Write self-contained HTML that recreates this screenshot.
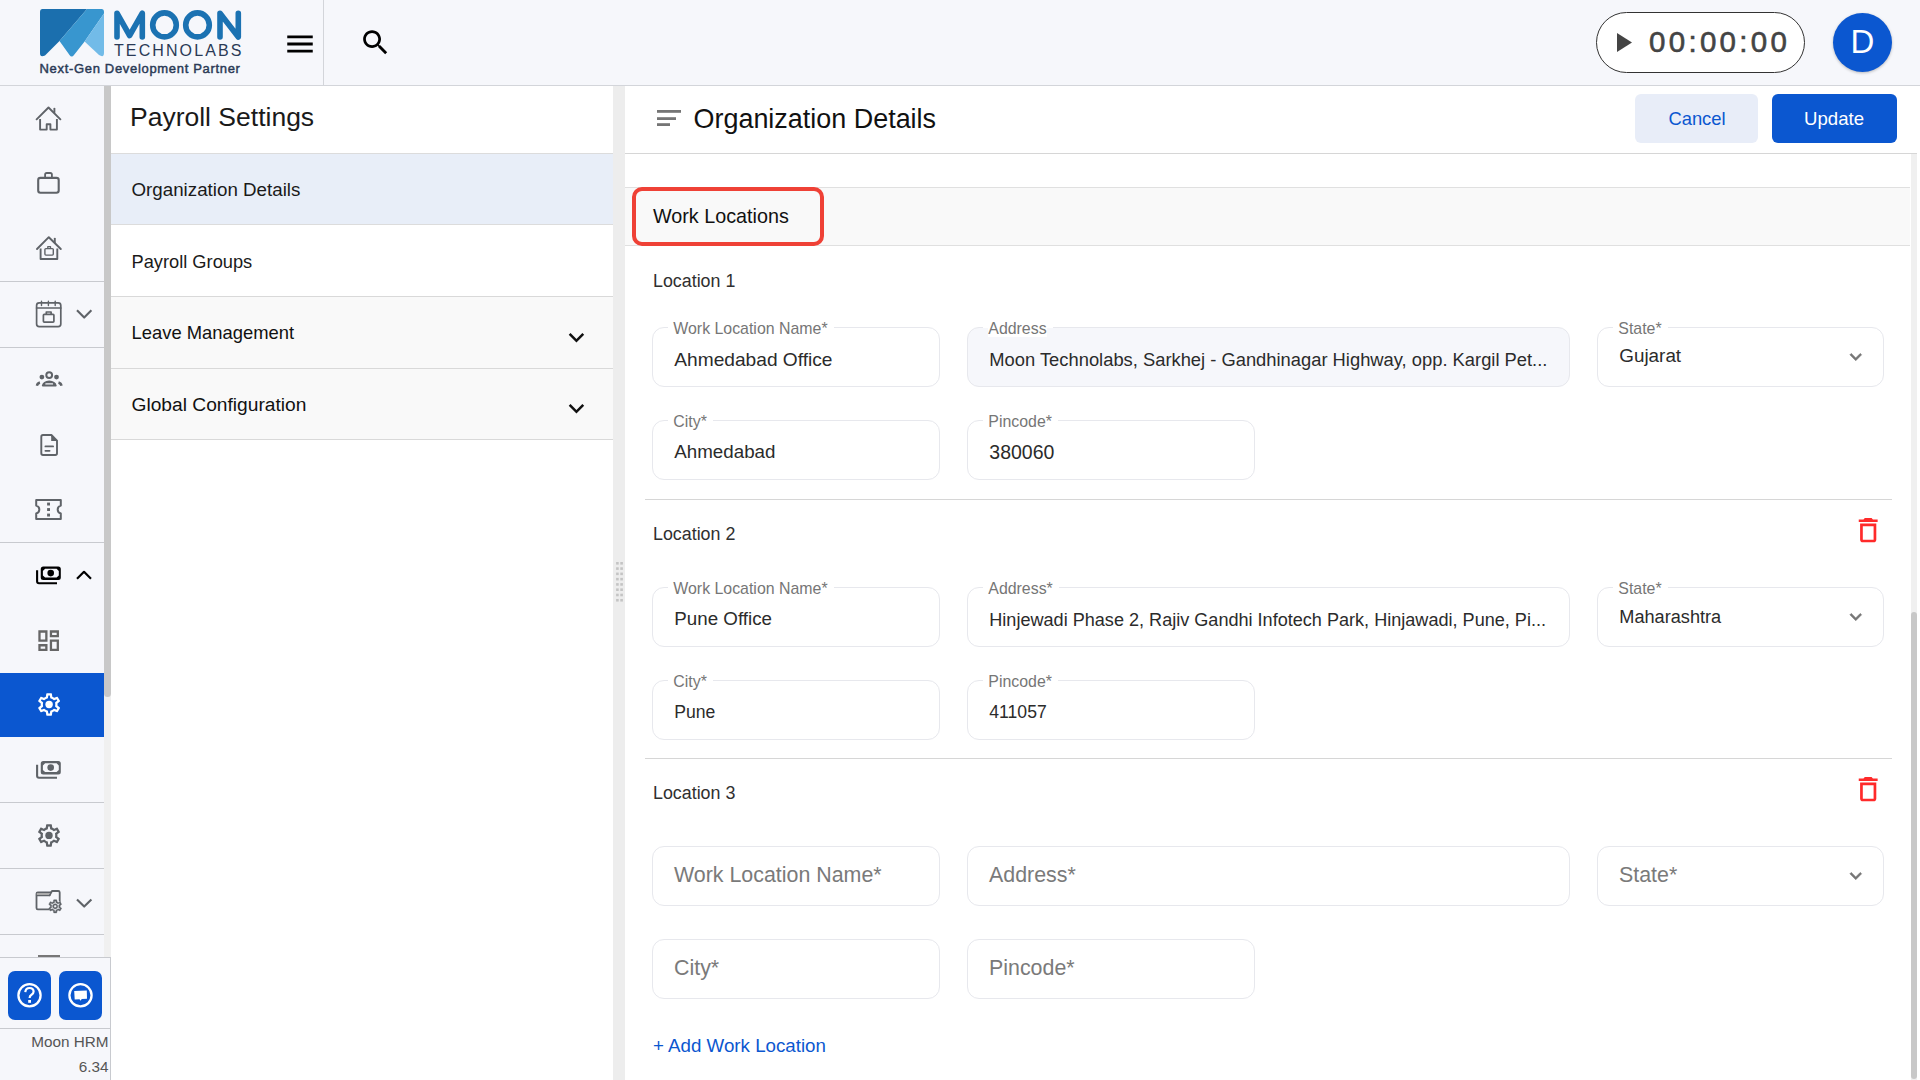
<!DOCTYPE html>
<html><head><meta charset="utf-8">
<style>
*{margin:0;padding:0;box-sizing:border-box}
html,body{width:1920px;height:1080px;overflow:hidden;background:#fff;font-family:"Liberation Sans",sans-serif;}
.a{position:absolute}
.t{position:absolute;white-space:nowrap;line-height:1}
svg{position:absolute;overflow:visible}
/* top bar */
#top{left:0;top:0;width:1920px;height:86px;background:#f6f7fb;border-bottom:1px solid #d3d5da}
/* sidebar */
#side{left:0;top:86px;width:111px;height:994px;background:#f6f7fb}
.hr{position:absolute;height:1px;background:#c8cacf}
/* settings panel */
#panel{left:111px;top:86px;width:502px;height:994px;background:#fff}
#split{left:613px;top:86px;width:12px;height:994px;background:#ededed}
#main{left:625px;top:86px;width:1295px;height:994px;background:#fff}
.fld{position:absolute;border:1px solid #e7e8ed;border-radius:12px;background:#fff}
.lbl{position:absolute;white-space:nowrap;line-height:1;font-size:15.5px;color:#767676;background:#fff}
.val{position:absolute;white-space:nowrap;line-height:1;font-size:18.5px;color:#2b2b2b}
.ph{position:absolute;white-space:nowrap;line-height:1;font-size:21.5px;color:#7a7a7a}
.loc{position:absolute;white-space:nowrap;line-height:1;font-size:18px;color:#303030}
</style></head>
<body>
<!-- TOP BAR -->
<div id="top" class="a">
  <!-- logo mark -->
  <svg style="left:0;top:0" width="260" height="86" viewBox="0 0 260 86">
    <path d="M42.5 9 H87 L59.5 41 L45 55.5 Q40 58 40 53 V12 Q40 9 42.5 9Z" fill="#1b6fae"/>
    <path d="M87 9 H101.5 Q104 9 104 12 V13.5 L84.6 41.5 L74 55 Q71.7 58 69.5 55 L59.5 41Z" fill="#3896cf"/>
    <path d="M104 13.5 V53 Q104 58 99 55 L84.6 41.5Z" fill="#72bbe8"/>
    <g fill="none" stroke="#1b72b2" stroke-width="5.6" stroke-linecap="round" stroke-linejoin="round">
      <path d="M117 37 V13.2 L129.6 35.5 L142.3 13.2 V37"/>
      <ellipse cx="164.5" cy="24.9" rx="11.8" ry="12"/>
      <ellipse cx="197.5" cy="24.9" rx="11.8" ry="12"/>
      <path d="M220 37 V13.2 L238.3 37 V13.2"/>
    </g>
  </svg>
  <div class="t" style="left:114px;top:42.5px;font-size:16px;letter-spacing:2.1px;color:#2a3a56">TECHNOLABS</div>
  <div class="t" style="left:39.5px;top:61.6px;font-size:13px;letter-spacing:0.68px;color:#2a3a56;-webkit-text-stroke:0.45px #2a3a56">Next-Gen Development Partner</div>
  <!-- menu -->
  <svg style="left:283px;top:27px" width="34" height="34" viewBox="0 0 24 24"><path d="M3 18h18v-2H3v2zm0-5h18v-2H3v2zm0-7v2h18V6H3z" fill="#000"/></svg>
  <div class="a" style="left:323px;top:0;width:1px;height:85px;background:#d3d5da"></div>
  <!-- search -->
  <svg style="left:359px;top:26px" width="33" height="33" viewBox="0 0 24 24"><path d="M15.5 14h-.79l-.28-.27C15.41 12.59 16 11.11 16 9.5 16 5.91 13.09 3 9.5 3S3 5.91 3 9.5 5.91 16 9.5 16c1.61 0 3.09-.59 4.23-1.57l.27.28v.79l5 4.99L20.49 19l-4.99-5zm-6 0C7.01 14 5 11.99 5 9.5S7.01 5 9.5 5 14 7.01 14 9.5 11.99 14 9.5 14z" fill="#000"/></svg>
  <!-- timer -->
  <div class="a" style="left:1596px;top:12px;width:209px;height:61px;border:1.3px solid #333;border-radius:31px;background:#fff"></div>
  <svg style="left:0;top:0" width="1920" height="86"><path d="M1617 33 L1632 42.5 L1617 52Z" fill="#444"/></svg>
  <div class="t" style="left:1649px;top:27.2px;font-size:29.5px;letter-spacing:3.3px;color:#444;-webkit-text-stroke:0.6px #444">00:00:00</div>
  <!-- avatar -->
  <div class="a" style="left:1833px;top:13px;width:59px;height:59px;border-radius:50%;background:#0b57d0;box-shadow:0 1px 3px rgba(0,0,0,.25)"></div>
  <div class="t" style="left:1833px;top:24.9px;width:59px;text-align:center;font-size:33px;color:#fff">D</div>
</div>

<!-- SIDEBAR -->
<div id="side" class="a">
  <div class="hr" style="left:0;top:195px;width:104px"></div>
  <div class="hr" style="left:0;top:261px;width:104px"></div>
  <div class="hr" style="left:0;top:456px;width:104px"></div>
  <div class="hr" style="left:0;top:716px;width:104px"></div>
  <div class="hr" style="left:0;top:782px;width:104px"></div>
  <div class="hr" style="left:0;top:848px;width:104px"></div>
  <div class="a" style="left:0;top:587px;width:104px;height:64px;background:#0b57d0"></div>
  <!-- scrollbar -->
  <div class="a" style="left:104px;top:0;width:7px;height:871px;background:#f0f0f0"></div>
  <div class="a" style="left:104px;top:0;width:7px;height:611px;background:#c8c8c8;border-radius:0 0 3.5px 3.5px"></div>
  <div class="a" style="left:37.5px;top:869.3px;width:22px;height:1.6px;background:#777"></div>
  <div class="hr" style="left:0;top:871px;width:111px;background:#c8cacf"></div>
  <div class="hr" style="left:0;top:942px;width:111px;background:#c8cacf"></div>
  <div class="a" style="left:110px;top:871px;width:1px;height:123px;background:#c8cacf"></div>
  <div class="a" style="left:8px;top:885px;width:43px;height:49px;border-radius:7px;background:#0b57d0"></div>
  <div class="a" style="left:59px;top:885px;width:43px;height:49px;border-radius:7px;background:#0b57d0"></div>
  <div class="t" style="left:0;top:948px;width:108.5px;text-align:right;font-size:15.3px;color:#555">Moon HRM</div>
  <div class="t" style="left:0;top:973px;width:108.5px;text-align:right;font-size:15.3px;color:#555">6.34</div>
</div>

<svg style="left:0;top:0" width="112" height="1080" viewBox="0 0 112 1080">
 <g fill="none" stroke="#5f6368" stroke-width="1.9" stroke-linecap="round" stroke-linejoin="round">
  <!-- home -->
  <path d="M36.6 119.3 L48.5 107.5 L60.4 119.3"/>
  <path d="M54.4 108.6 V112.3"/>
  <path d="M40.1 118.9 V129.6 H46.7 V124.3 H50.4 V129.6 H56.9 V118.9" stroke-linecap="butt"/>
  <!-- briefcase -->
  <rect x="38.2" y="177.9" width="20.5" height="14.8" rx="2.2" stroke-width="2.1"/>
  <path d="M45.1 177.5 V174.6 Q45.1 173 46.7 173 H50.3 Q51.9 173 51.9 174.6 V177.5" stroke-width="1.8"/>
  <!-- home work -->
  <path d="M37 249 L48.8 237.2 L60.8 249"/>
  <path d="M54.8 238.6 V242.4"/>
  <path d="M40.6 248.6 V259 H57.3 V248.6" stroke-linecap="butt"/>
  <rect x="44.9" y="248.6" width="8.4" height="6.5" rx="1" stroke-width="1.4"/>
  <path d="M47.8 248.4 V246.6 H50.5 V248.4" stroke-width="1.3"/>
  <!-- calendar -->
  <rect x="36.6" y="302.9" width="24.2" height="23.8" rx="2.6" stroke-width="1.7"/>
  <path d="M36.6 308 H60.8" stroke-width="1.7"/>
  <path d="M41.5 301.2 V305.6 M48.4 301.2 V305.6 M55.2 301.2 V305.6" stroke-width="1.4"/>
  <rect x="43.4" y="314.3" width="10.5" height="7.8" rx="0.9" stroke-width="1.7"/>
  <path d="M46.3 313.9 V312 H51.1 V313.9" stroke-width="1.7"/>
  <path d="M77 310.3 L84.2 317.6 L91.4 310.3" stroke-width="2.1" stroke-linecap="butt"/>
  <!-- groups -->
  <circle cx="49.2" cy="375.1" r="2.9" stroke-width="2"/>
  <path d="M42.6 385.6 Q43.6 381.6 49.2 381.3 Q54.8 381.6 55.9 385.6 Z" stroke-width="1.6" fill="#5f6368"/>
  <path d="M36.9 385.8 Q37.3 383.3 39.9 382.5 M61.5 385.8 Q61.1 383.3 58.5 382.5" stroke-width="2.4" stroke-linecap="butt"/><path d="M45.8 383.9 H52.6" stroke="#f6f7fb" stroke-width="1.1"/>
  <!-- doc -->
  <path d="M51.4 435 H43 Q41.3 435 41.3 436.7 V453.3 Q41.3 455 43 455 H55.3 Q57 455 57 453.3 V440.6 Z" stroke-width="1.9"/>
  <path d="M45.4 446.4 H53.1 M45.4 450.8 H49.6" stroke-width="1.8"/>
  <!-- ticket -->
  <path d="M36.2 500.1 H60.8 V505.6 A4 4 0 0 0 60.8 513.4 V518.9 H36.2 V513.4 A4 4 0 0 0 36.2 505.6 Z" stroke-width="2"/>
  <!-- payments black -->
  <g stroke="#000">

   <path d="M77 578.8 L84 571.8 L91 578.8" stroke-width="2.2" stroke-linecap="butt"/>
  </g>
  <!-- payments gray -->

  <!-- folder gear -->
  <path d="M49.6 895.3 L52 891 H58.2 Q59.7 891 59.7 892.5 V902.5 M50.5 909.4 H37.8 Q36.5 909.4 36.5 908.1 V893.7 Q36.5 892.4 37.8 892.4 H50.6" stroke-width="1.8"/>
  <path d="M36.8 895.3 H49.6" stroke-width="1.8"/>

  <path d="M77 899.4 L84.2 906.6 L91.4 899.4" stroke-width="2.1" stroke-linecap="butt"/>
 </g>
 <!-- fills -->
 <g fill="#5f6368">
  <path d="M51.2 434.8 L57.3 440.9 H51.2 Z"/>
  <rect x="47.1" y="502.6" width="2.9" height="2.9"/><rect x="47.1" y="508.1" width="2.9" height="2.9"/><rect x="47.1" y="513.6" width="2.9" height="2.9"/>
  <circle cx="41.9" cy="377.1" r="2.4"/><circle cx="56.5" cy="377.1" r="2.4"/>
  
  <path d="M36.8 893 H49.6 L49 895 H36.8Z" fill="#aaa"/>
 </g>
 <path fill-rule="evenodd" fill="#000" d="M43.25 566.4 H58.3 Q60.8 566.4 60.8 568.9 V577.4 Q60.8 579.9 58.3 579.9 H43.25 Q40.75 579.9 40.75 577.4 V568.9 Q40.75 566.4 43.25 566.4 Z M45.1 568.7 H56.6 L58.8 570.9 V575.4 L56.6 577.6 H45.1 L42.9 575.4 V570.9 Z"/><circle cx="50.7" cy="573.1" r="3.3" fill="#000"/><path d="M37.1 570.2 V581.3 Q37.1 583.2 39 583.2 H57" fill="none" stroke="#000" stroke-width="2.1"/><path fill-rule="evenodd" fill="#5f6368" d="M43.25 760.9 H58.3 Q60.8 760.9 60.8 763.4 V771.9 Q60.8 774.4 58.3 774.4 H43.25 Q40.75 774.4 40.75 771.9 V763.4 Q40.75 760.9 43.25 760.9 Z M45.1 763.2 H56.6 L58.8 765.4 V769.9 L56.6 772.1 H45.1 L42.9 769.9 V765.4 Z"/><circle cx="50.7" cy="767.6" r="3.3" fill="#5f6368"/><path d="M37.1 764.7 V775.8 Q37.1 777.7 39 777.7 H57" fill="none" stroke="#5f6368" stroke-width="2.1"/>
 <!-- dashboard -->
 <svg x="34.9" y="626.9" width="27.5" height="27.5" viewBox="0 0 24 24"><path fill="#666" d="M19 5v2h-4V5h4M9 5v6H5V5h4m10 8v6h-4v-6h4M9 17v2H5v-2h4M21 3h-8v6h8V3zM11 3H3v10h8V3zm10 8h-8v10h8V11zm-8 4H3v6h8v-6z"/></svg>
 <!-- gear active -->
 <svg x="35.6" y="691" width="27" height="27" viewBox="0 0 24 24"><path fill="#fff" d="M19.43 12.98c.04-.32.07-.64.07-.98 0-.34-.03-.66-.07-.98l2.11-1.65c.19-.15.24-.42.12-.64l-2-3.46c-.09-.16-.26-.25-.44-.25-.06 0-.12.01-.17.03l-2.49 1c-.52-.4-1.08-.73-1.69-.98l-.38-2.65C14.46 2.18 14.25 2 14 2h-4c-.25 0-.46.18-.49.42l-.38 2.65c-.61.25-1.170.59-1.69.98l-2.49-1c-.06-.02-.12-.03-.18-.03-.17 0-.34.09-.43.25l-2 3.46c-.13.22-.07.49.12.64l2.11 1.650c-.04.32-.07.65-.07.98 0 .33.03.66.07.98l-2.11 1.65c-.19.15-.24.42-.12.64l2 3.46c.09.16.26.25.44.25.06 0 .12-.01.17-.03l2.49-1c.52.4 1.08.73 1.69.98l.38 2.65c.03.24.24.42.49.42h4c.25 0 .46-.18.49-.42l.38-2.65c.61-.25 1.17-.59 1.69-.98l2.49 1c.06.02.12.03.18.03.17 0 .34-.09.43-.25l2-3.46c.12-.22.07-.49-.12-.64l-2.11-1.65zm-1.98-1.71c.04.31.05.52.05.73 0 .21-.02.43-.05.73l-.14 1.13.89.7 1.08.84-.7 1.21-1.27-.51-1.04-.42-.9.68c-.43.32-.84.56-1.25.73l-1.06.43-.16 1.13-.2 1.35h-1.4l-.19-1.35-.16-1.13-1.06-.43c-.43-.18-.83-.41-1.23-.71l-.91-.7-1.06.43-1.27.51-.7-1.21 1.08-.84.89-.7-.14-1.130c-.03-.31-.05-.54-.05-.74s.02-.43.05-.73l.14-1.13-.89-.7-1.08-.84.7-1.21 1.27.51 1.04.42.9-.68c.43-.32.84-.56 1.25-.73l1.06-.43.16-1.13.2-1.35h1.39l.19 1.35.16 1.13 1.06.43c.43.18.83.41 1.23.71l.91.7 1.06-.43 1.27-.51.7 1.21-1.07.85-.89.7.14 1.13z"/><circle cx="12" cy="12" r="3.3" fill="#fff"/></svg>
 <circle cx="55.2" cy="906.3" r="6.6" fill="#f6f7fb"/>
 <svg x="47.3" y="898.4" width="15.8" height="15.8" viewBox="0 0 24 24"><path fill="#5f6368" stroke="#5f6368" stroke-width="0.6" d="M19.43 12.98c.04-.32.07-.64.07-.98 0-.34-.03-.66-.07-.98l2.11-1.65c.19-.15.24-.42.12-.64l-2-3.46c-.09-.16-.26-.25-.44-.25-.06 0-.12.01-.17.03l-2.49 1c-.52-.4-1.08-.73-1.69-.98l-.38-2.65C14.46 2.18 14.25 2 14 2h-4c-.25 0-.46.18-.49.42l-.38 2.65c-.61.25-1.170.59-1.69.98l-2.49-1c-.06-.02-.12-.03-.18-.03-.17 0-.34.09-.43.25l-2 3.46c-.13.22-.07.49.12.64l2.11 1.650c-.04.32-.07.65-.07.98 0 .33.03.66.07.98l-2.11 1.65c-.19.15-.24.42-.12.64l2 3.46c.09.16.26.25.44.25.06 0 .12-.01.17-.03l2.49-1c.52.4 1.08.73 1.69.98l.38 2.65c.03.24.24.42.49.42h4c.25 0 .46-.18.49-.42l.38-2.65c.61-.25 1.17-.59 1.69-.98l2.49 1c.06.02.12.03.18.03.17 0 .34-.09.43-.25l2-3.46c.12-.22.07-.49-.12-.64l-2.11-1.65zm-1.98-1.71c.04.31.05.52.05.73 0 .21-.02.43-.05.73l-.14 1.13.89.7 1.08.84-.7 1.21-1.27-.51-1.04-.42-.9.68c-.43.32-.84.56-1.25.73l-1.06.43-.16 1.13-.2 1.35h-1.4l-.19-1.35-.16-1.13-1.06-.43c-.43-.18-.83-.41-1.23-.71l-.91-.7-1.06.43-1.27.51-.7-1.21 1.08-.84.89-.7-.14-1.130c-.03-.31-.05-.54-.05-.74s.02-.43.05-.73l.14-1.13-.89-.7-1.08-.84.7-1.21 1.27.51 1.04.42.9-.68c.43-.32.84-.56 1.25-.73l1.06-.43.16-1.13.2-1.35h1.39l.19 1.35.16 1.13 1.06.43c.43.18.83.41 1.23.71l.91.7 1.06-.43 1.27-.51.7 1.21-1.07.85-.89.7.14 1.13zM12 8c-2.21 0-4 1.79-4 4s1.79 4 4 4 4-1.79 4-4-1.79-4-4-4zm0 6c-1.1 0-2-.9-2-2s.9-2 2-2 2 .9 2 2-.9 2-2 2z"/></svg>
 <!-- gear gray -->
 <svg x="35.5" y="821.9" width="27" height="27" viewBox="0 0 24 24"><path fill="#5f6368" d="M19.43 12.98c.04-.32.07-.64.07-.98 0-.34-.03-.66-.07-.98l2.11-1.65c.19-.15.24-.42.12-.64l-2-3.46c-.09-.16-.26-.25-.44-.25-.06 0-.12.01-.17.03l-2.49 1c-.52-.4-1.08-.73-1.69-.98l-.38-2.65C14.46 2.18 14.25 2 14 2h-4c-.25 0-.46.18-.49.42l-.38 2.65c-.61.25-1.170.59-1.69.98l-2.49-1c-.06-.02-.12-.03-.18-.03-.17 0-.34.09-.43.25l-2 3.46c-.13.22-.07.49.12.64l2.11 1.650c-.04.32-.07.65-.07.98 0 .33.03.66.07.98l-2.11 1.65c-.19.15-.24.42-.12.64l2 3.46c.09.16.26.25.44.25.06 0 .12-.01.17-.03l2.49-1c.52.4 1.08.73 1.69.98l.38 2.65c.03.24.24.42.49.42h4c.25 0 .46-.18.49-.42l.38-2.65c.61-.25 1.17-.59 1.69-.98l2.49 1c.06.02.12.03.18.03.17 0 .34-.09.43-.25l2-3.46c.12-.22.07-.49-.12-.64l-2.11-1.65zm-1.98-1.71c.04.31.05.52.05.73 0 .21-.02.43-.05.73l-.14 1.13.89.7 1.08.84-.7 1.21-1.27-.51-1.04-.42-.9.68c-.43.32-.84.56-1.25.73l-1.06.43-.16 1.13-.2 1.35h-1.4l-.19-1.35-.16-1.13-1.06-.43c-.43-.18-.83-.41-1.23-.71l-.91-.7-1.06.43-1.27.51-.7-1.21 1.08-.84.89-.7-.14-1.130c-.03-.31-.05-.54-.05-.74s.02-.43.05-.73l.14-1.13-.89-.7-1.08-.84.7-1.21 1.27.51 1.04.42.9-.68c.43-.32.84-.56 1.25-.73l1.06-.43.16-1.13.2-1.35h1.39l.19 1.35.16 1.13 1.06.43c.43.18.83.41 1.23.71l.91.7 1.06-.43 1.27-.51.7 1.21-1.07.85-.89.7.14 1.13z"/><circle cx="12" cy="12" r="3.3" fill="#5f6368"/></svg>
 <!-- help -->
 <circle cx="29.5" cy="995.3" r="11.1" fill="none" stroke="#fff" stroke-width="2.3"/>
 <circle cx="80.5" cy="995.3" r="11.1" fill="none" stroke="#fff" stroke-width="2.3"/>
 <path d="M25.3 992.2 Q25.6 988 29.6 988 Q33.6 988 33.6 991.6 Q33.6 993.6 31.5 994.8 Q29.6 995.9 29.6 998" fill="none" stroke="#fff" stroke-width="2.2"/>
 <rect x="28.2" y="1000" width="2.8" height="2.8" fill="#fff"/>
 <path d="M74.2 990.9 L86.8 990.6 L87 998.7 L81.7 999 L80.6 1000.8 L79.5 999.2 L74.7 999.4Z" fill="#fff"/>
</svg>
<!-- SETTINGS PANEL -->
<div id="panel" class="a">
  <div class="t" style="left:19px;top:17.7px;font-size:26.5px;color:#1a1a1a">Payroll Settings</div>
  <div class="hr" style="left:0;top:67px;width:502px;background:#dcdcdc"></div>
  <div class="a" style="left:0;top:68px;width:502px;height:70px;background:#e8eef8"></div>
  <div class="hr" style="left:0;top:138px;width:502px;background:#dcdcdc"></div>
  <div class="hr" style="left:0;top:210px;width:502px;background:#d9d9d9"></div>
  <div class="a" style="left:0;top:211px;width:502px;height:71px;background:#f9f9f9"></div>
  <div class="hr" style="left:0;top:282px;width:502px;background:#d9d9d9"></div>
  <div class="a" style="left:0;top:283px;width:502px;height:70px;background:#f9f9f9"></div>
  <div class="hr" style="left:0;top:353px;width:502px;background:#d9d9d9"></div>
  <div class="t" style="left:20.5px;top:95px;font-size:18.75px;color:#1a1a1a">Organization Details</div>
  <div class="t" style="left:20.5px;top:167.3px;font-size:18.25px;color:#1a1a1a">Payroll Groups</div>
  <div class="t" style="left:20.5px;top:238.1px;font-size:18.4px;color:#111">Leave Management</div>
  <div class="t" style="left:20.5px;top:309.3px;font-size:19.2px;color:#111">Global Configuration</div>
  <svg style="left:450.1px;top:235.9px" width="30.9" height="30.9" viewBox="0 0 24 24"><path d="M16.59 8.59L12 13.17 7.41 8.59 6 10l6 6 6-6z" fill="#111"/></svg>
  <svg style="left:450.1px;top:306.7px" width="30.9" height="30.9" viewBox="0 0 24 24"><path d="M16.59 8.59L12 13.17 7.41 8.59 6 10l6 6 6-6z" fill="#111"/></svg>
</div>
<div id="split" class="a">
  <svg style="left:0;top:0" width="12" height="994"><g fill="#c4c4c4">
  <rect x="3.1" y="476.00" width="2.6" height="2.6"/><rect x="7.3" y="476.00" width="2.6" height="2.6"/><rect x="3.1" y="481.28" width="2.6" height="2.6"/><rect x="7.3" y="481.28" width="2.6" height="2.6"/><rect x="3.1" y="486.56" width="2.6" height="2.6"/><rect x="7.3" y="486.56" width="2.6" height="2.6"/><rect x="3.1" y="491.84" width="2.6" height="2.6"/><rect x="7.3" y="491.84" width="2.6" height="2.6"/><rect x="3.1" y="497.12" width="2.6" height="2.6"/><rect x="7.3" y="497.12" width="2.6" height="2.6"/><rect x="3.1" y="502.40" width="2.6" height="2.6"/><rect x="7.3" y="502.40" width="2.6" height="2.6"/><rect x="3.1" y="507.68" width="2.6" height="2.6"/><rect x="7.3" y="507.68" width="2.6" height="2.6"/><rect x="3.1" y="512.96" width="2.6" height="2.6"/><rect x="7.3" y="512.96" width="2.6" height="2.6"/></g></svg>
</div>

<!-- MAIN -->
<!--MAIN START-->
<div id="main" class="a"></div>
<div class="a" style="left:625px;top:153px;width:1292px;height:1px;background:#d6d6d6"></div>
<svg style="left:0;top:0" width="1920" height="160"><g fill="#757575"><rect x="657" y="110" width="24" height="2.8"/><rect x="657" y="117.2" width="19" height="2.8"/><rect x="657" y="123.2" width="13" height="2.8"/></g></svg>
<div class="t" style="left:693.50px;top:105.69px;font-size:26.95px;color:#111;">Organization Details</div>
<div class="a" style="left:1635px;top:94px;width:123px;height:49px;border-radius:6px;background:#e8edf8"></div>
<div class="t" style="left:1635.00px;top:109.92px;font-size:18.4px;color:#0b57d0;width:123px;text-align:center;left:1635.5px">Cancel</div>
<div class="a" style="left:1772px;top:94px;width:125px;height:49px;border-radius:6px;background:#0b57d0"></div>
<div class="t" style="left:1772.00px;top:109.76px;font-size:18.6px;color:#fff;width:125px;text-align:center;left:1771.5px">Update</div>
<div class="a" style="left:1911px;top:154px;width:6px;height:926px;background:#f0f0f0"></div>
<div class="a" style="left:1911px;top:612px;width:6px;height:467px;background:#c8c8c8;border-radius:3px"></div>
<div class="a" style="left:625px;top:187px;width:1285px;height:59px;background:#f9f9f9;border-top:1px solid #e0e0e0;border-bottom:1px solid #e0e0e0"></div>
<div class="a" style="left:631.8px;top:186.6px;width:192.2px;height:59.4px;border:4.2px solid #ef4136;border-radius:10px"></div>
<div class="t" style="left:653.00px;top:207.48px;font-size:19.75px;color:#111;">Work Locations</div>
<div class="t" style="left:653.00px;top:273.19px;font-size:17.85px;color:#303030;">Location 1</div>
<div class="fld" style="left:652px;top:327px;width:288px;height:60px;background:#fff"></div>
<div class="a" style="left:668.30px;top:327px;width:165.85px;height:1px;background:#fff"></div>
<div class="lbl" style="left:673.3px;top:320.74px;font-size:15.9px;background:#fff">Work Location Name*</div>
<div class="t" style="left:674.30px;top:350.09px;font-size:19.15px;color:#2b2b2b;">Ahmedabad Office</div>
<div class="fld" style="left:967px;top:327px;width:603px;height:60px;background:#f6f7fb"></div>
<div class="a" style="left:983.30px;top:327px;width:69.83px;height:1px;background:#fff"></div>
<div class="lbl" style="left:988.3px;top:320.74px;font-size:15.9px;background:#fff">Address</div>
<div class="t" style="left:989.30px;top:350.77px;font-size:18.35px;color:#2b2b2b;">Moon Technolabs, Sarkhej - Gandhinagar Highway, opp. Kargil Pet...</div>
<div class="fld" style="left:1597px;top:327px;width:287px;height:60px;background:#fff"></div>
<div class="a" style="left:1613.30px;top:327px;width:54.81px;height:1px;background:#fff"></div>
<div class="lbl" style="left:1618.3px;top:320.74px;font-size:15.9px;background:#fff">State*</div>
<div class="t" style="left:1619.30px;top:347.34px;font-size:18.85px;color:#2b2b2b;">Gujarat</div>
<svg style="left:1843.9px;top:345.3px" width="23.5" height="23.5" viewBox="0 0 24 24"><path d="M16.59 8.59L12 13.17 7.41 8.59 6 10l6 6 6-6z" fill="#757575" stroke="#757575" stroke-width="0.6"/></svg>
<div class="fld" style="left:652px;top:420px;width:288px;height:60px;background:#fff"></div>
<div class="a" style="left:668.30px;top:420px;width:45.07px;height:1px;background:#fff"></div>
<div class="lbl" style="left:673.3px;top:413.74px;font-size:15.9px;background:#fff">City*</div>
<div class="t" style="left:674.30px;top:443.43px;font-size:18.75px;color:#2b2b2b;">Ahmedabad</div>
<div class="fld" style="left:967px;top:420px;width:288px;height:60px;background:#fff"></div>
<div class="a" style="left:983.30px;top:420px;width:75.14px;height:1px;background:#fff"></div>
<div class="lbl" style="left:988.3px;top:413.74px;font-size:15.9px;background:#fff">Pincode*</div>
<div class="t" style="left:989.30px;top:442.79px;font-size:19.5px;color:#2b2b2b;">380060</div>
<div class="a" style="left:645px;top:499px;width:1247px;height:1px;background:#d6d6d6"></div>
<div class="t" style="left:653.00px;top:526.39px;font-size:17.85px;color:#303030;">Location 2</div>
<svg style="left:1852px;top:514px" width="32.4" height="32.4" viewBox="0 0 24 24"><path fill="#ff2a2a" d="M6 19c0 1.1.9 2 2 2h8c1.1 0 2-.9 2-2V7H6v12zM8 9h8v10H8V9zm7.5-5l-1-1h-5l-1 1H5v2h14V4z"/></svg>
<div class="fld" style="left:652px;top:587px;width:288px;height:60px;background:#fff"></div>
<div class="a" style="left:668.30px;top:587px;width:165.85px;height:1px;background:#fff"></div>
<div class="lbl" style="left:673.3px;top:580.74px;font-size:15.9px;background:#fff">Work Location Name*</div>
<div class="t" style="left:674.30px;top:610.43px;font-size:18.75px;color:#2b2b2b;">Pune Office</div>
<div class="fld" style="left:967px;top:587px;width:603px;height:60px;background:#fff"></div>
<div class="a" style="left:983.30px;top:587px;width:76.01px;height:1px;background:#fff"></div>
<div class="lbl" style="left:988.3px;top:580.74px;font-size:15.9px;background:#fff">Address*</div>
<div class="t" style="left:989.30px;top:611.00px;font-size:18.08px;color:#2b2b2b;">Hinjewadi Phase 2, Rajiv Gandhi Infotech Park, Hinjawadi, Pune, Pi...</div>
<div class="fld" style="left:1597px;top:587px;width:287px;height:60px;background:#fff"></div>
<div class="a" style="left:1613.30px;top:587px;width:54.81px;height:1px;background:#fff"></div>
<div class="lbl" style="left:1618.3px;top:580.74px;font-size:15.9px;background:#fff">State*</div>
<div class="t" style="left:1619.30px;top:607.94px;font-size:18.15px;color:#2b2b2b;">Maharashtra</div>
<svg style="left:1843.9px;top:605.3px" width="23.5" height="23.5" viewBox="0 0 24 24"><path d="M16.59 8.59L12 13.17 7.41 8.59 6 10l6 6 6-6z" fill="#757575" stroke="#757575" stroke-width="0.6"/></svg>
<div class="fld" style="left:652px;top:680px;width:288px;height:60px;background:#fff"></div>
<div class="a" style="left:668.30px;top:680px;width:45.07px;height:1px;background:#fff"></div>
<div class="lbl" style="left:673.3px;top:673.74px;font-size:15.9px;background:#fff">City*</div>
<div class="t" style="left:674.30px;top:704.40px;font-size:17.6px;color:#2b2b2b;">Pune</div>
<div class="fld" style="left:967px;top:680px;width:288px;height:60px;background:#fff"></div>
<div class="a" style="left:983.30px;top:680px;width:75.14px;height:1px;background:#fff"></div>
<div class="lbl" style="left:988.3px;top:673.74px;font-size:15.9px;background:#fff">Pincode*</div>
<div class="t" style="left:989.30px;top:704.40px;font-size:17.6px;color:#2b2b2b;">411057</div>
<div class="a" style="left:645px;top:758px;width:1247px;height:1px;background:#d6d6d6"></div>
<div class="t" style="left:653.00px;top:785.39px;font-size:17.85px;color:#303030;">Location 3</div>
<svg style="left:1852px;top:773px" width="32.4" height="32.4" viewBox="0 0 24 24"><path fill="#ff2a2a" d="M6 19c0 1.1.9 2 2 2h8c1.1 0 2-.9 2-2V7H6v12zM8 9h8v10H8V9zm7.5-5l-1-1h-5l-1 1H5v2h14V4z"/></svg>
<div class="fld" style="left:652px;top:846px;width:288px;height:60px;background:#fff"></div>
<div class="t" style="left:674.00px;top:864.88px;font-size:21.4px;color:#7a7a7a;">Work Location Name*</div>
<div class="fld" style="left:967px;top:846px;width:603px;height:60px;background:#fff"></div>
<div class="t" style="left:989.00px;top:864.88px;font-size:21.4px;color:#7a7a7a;">Address*</div>
<div class="fld" style="left:1597px;top:846px;width:287px;height:60px;background:#fff"></div>
<div class="t" style="left:1619.00px;top:864.88px;font-size:21.4px;color:#7a7a7a;">State*</div>
<svg style="left:1843.9px;top:864.3px" width="23.5" height="23.5" viewBox="0 0 24 24"><path d="M16.59 8.59L12 13.17 7.41 8.59 6 10l6 6 6-6z" fill="#757575" stroke="#757575" stroke-width="0.6"/></svg>
<div class="fld" style="left:652px;top:939px;width:288px;height:60px;background:#fff"></div>
<div class="t" style="left:674.00px;top:957.88px;font-size:21.4px;color:#7a7a7a;">City*</div>
<div class="fld" style="left:967px;top:939px;width:288px;height:60px;background:#fff"></div>
<div class="t" style="left:989.00px;top:957.88px;font-size:21.4px;color:#7a7a7a;">Pincode*</div>
<div class="t" style="left:653.00px;top:1037.05px;font-size:18.73px;color:#0b57d0;">+ Add Work Location</div>
<!--MAIN END-->
</body></html>
